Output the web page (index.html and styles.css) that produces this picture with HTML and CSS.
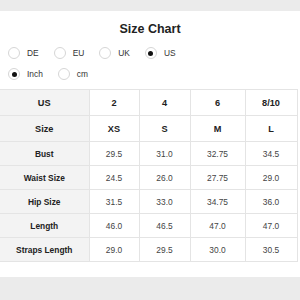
FILE: index.html
```html
<!DOCTYPE html>
<html lang="en">

<head>
  <meta charset="UTF-8">
  <meta name="viewport" content="width=device-width, initial-scale=1.0">
  <title>Size Chart</title>
  <link rel="stylesheet" href="styles.css">
</head>

<body>
  <div class="sheet">
    <h1 class="title">Size Chart</h1>

    <div class="radio-row">
      <label class="radio"><span class="dot"></span>DE</label>
      <label class="radio"><span class="dot"></span>EU</label>
      <label class="radio"><span class="dot"></span>UK</label>
      <label class="radio checked"><span class="dot"></span>US</label>
    </div>

    <div class="radio-row">
      <label class="radio checked"><span class="dot"></span>Inch</label>
      <label class="radio"><span class="dot"></span>cm</label>
    </div>

    <table class="chart">
      <colgroup>
        <col class="c-label">
        <col class="c-2">
        <col class="c-4">
        <col class="c-6">
        <col class="c-8">
      </colgroup>
      <tr class="head">
        <th>US</th><td>2</td><td>4</td><td>6</td><td>8/10</td>
      </tr>
      <tr class="head">
        <th>Size</th><td>XS</td><td>S</td><td>M</td><td>L</td>
      </tr>
      <tr>
        <th>Bust</th><td>29.5</td><td>31.0</td><td>32.75</td><td>34.5</td>
      </tr>
      <tr>
        <th>Waist Size</th><td>24.5</td><td>26.0</td><td>27.75</td><td>29.0</td>
      </tr>
      <tr>
        <th>Hip Size</th><td>31.5</td><td>33.0</td><td>34.75</td><td>36.0</td>
      </tr>
      <tr>
        <th>Length</th><td>46.0</td><td>46.5</td><td>47.0</td><td>47.0</td>
      </tr>
      <tr>
        <th>Straps Length</th><td>29.0</td><td>29.5</td><td>30.0</td><td>30.5</td>
      </tr>
    </table>
  </div>
</body>

</html>
```

FILE: styles.css
```css
body {
  margin: 0;
  padding: 11px 0 0;
  background-color: #ebebeb;
  font-family: 'Liberation Sans', Arial, sans-serif;
  color: #333333;
}

.sheet {
  background-color: #ffffff;
  padding: 10px 0 15px;
  display: flex;
  flex-direction: column;
  gap: 9px;
}

.title {
  margin: 0;
  font-size: 12.5px;
  line-height: 17px;
  font-weight: bold;
  text-align: center;
  color: #222222;
}

.radio-row {
  display: flex;
  gap: 15px;
  padding-left: 8px;
  height: 12px;
}

.radio {
  display: flex;
  align-items: center;
  gap: 7px;
  font-size: 8.4px;
  color: #333333;
}

.dot {
  width: 10px;
  height: 10px;
  border: 1px solid #d6d6d6;
  border-radius: 50%;
  display: flex;
  align-items: center;
  justify-content: center;
}

.radio.checked .dot::after {
  content: "";
  width: 5px;
  height: 5px;
  border-radius: 50%;
  background-color: #111111;
}

.chart {
  border-collapse: collapse;
  table-layout: fixed;
  width: 297px;
  font-size: 8.4px;
  text-align: center;
}

.c-label { width: 89px; }
.c-2 { width: 50px; }
.c-4 { width: 51px; }
.c-6 { width: 55px; }
.c-8 { width: 52px; }

.chart th,
.chart td {
  height: 23px;
  padding: 0;
  border: 1px solid #e4e4e4;
  color: #444444;
}

.chart th {
  border-left: none;
  background-color: #f3f3f3;
  font-weight: bold;
  color: #222222;
}

.chart .head th,
.chart .head td {
  height: 25px;
  font-size: 9.2px;
  font-weight: bold;
  color: #222222;
}
```
